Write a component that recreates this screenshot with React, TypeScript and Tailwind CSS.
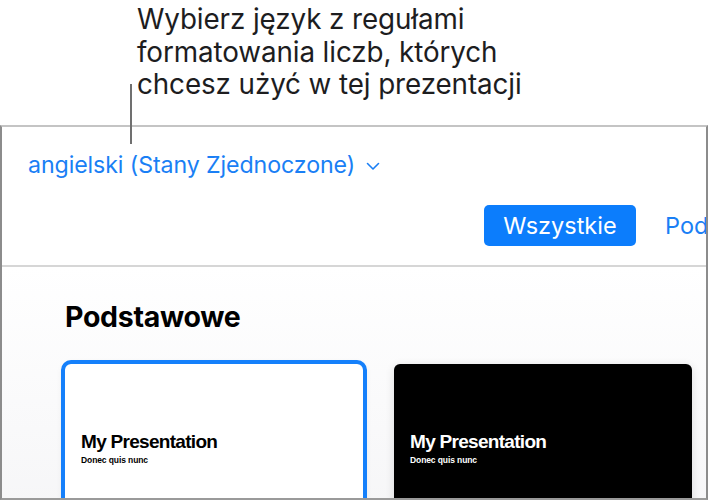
import React from "react";

const sans = { fontFamily: "Inter, 'Noto Sans', sans-serif" };

function Chevron() {
  return (
    <svg width="14" height="9" viewBox="0 0 14 9" className="ml-[11px] mt-[2px]">
      <path d="M1.5 1.5 L7 7 L12.5 1.5" fill="none" stroke="#1a7ff5" strokeWidth="1.6" strokeLinecap="round" strokeLinejoin="round" />
    </svg>
  );
}

function SlideCard({ dark, selected }: { dark?: boolean; selected?: boolean }) {
  return (
    <div
      className={
        "relative w-[298px] h-[200px] shrink-0 rounded-[6px] shadow-[0_2px_10px_rgba(0,0,0,0.12)] " +
        (dark ? "bg-black text-white" : "bg-white text-black") +
        (selected ? " outline-4 outline-[#1580fb] outline-offset-0" : "")
      }
    >
      <div className="pt-[67px] pl-[16px]" style={{ fontFamily: "'Liberation Sans', Arial, sans-serif" }}>
        <div className="text-[19px] leading-[21px] font-bold tracking-[-0.7px]">My Presentation</div>
        <div className="text-[8.5px] leading-[10px] font-bold mt-[3px] tracking-[-0.1px]">Donec quis nunc</div>
      </div>
    </div>
  );
}

export default function App() {
  return (
    <div className="relative w-[708px] h-[500px] bg-white overflow-hidden" style={sans}>
      <div className="h-[125px] pl-[137px] pt-[3px] text-[27.8px] leading-[32.5px] text-[#1d1d1f] tracking-[-0.1px] whitespace-nowrap">
        <div>Wybierz język z regułami</div>
        <div>formatowania liczb, których</div>
        <div>chcesz użyć w tej prezentacji</div>
      </div>
      <div className="h-[375px] border-t-2 border-t-[#c4c4c4] border-x-2 border-x-[#8c8c8c] border-b-2 border-b-[#9a9a9a] flex flex-col overflow-hidden">
        <div className="h-[140px] shrink-0 bg-white border-b-2 border-b-[#d6d6d6] flex flex-col">
          <div className="flex items-center pl-[26px] pt-[23px] text-[23.2px] leading-[30px] text-[#1a7ff5] tracking-[-0.1px] whitespace-nowrap">
            <span>angielski (Stany Zjednoczone)</span>
            <Chevron />
          </div>
          <div className="flex items-center pl-[482px] pt-[25px] whitespace-nowrap">
            <div className="w-[152px] h-[41px] rounded-[5px] bg-[#0c7dfc] text-white text-[23.5px] flex items-center justify-center shrink-0">
              Wszystkie
            </div>
            <div className="ml-[29px] text-[23.5px] text-[#1a7ff5]">Podstawowe</div>
          </div>
        </div>
        <div className="flex-1 bg-gradient-to-b from-white to-[#f4f4f6] pl-[63px]">
          <div className="pt-[33px] text-[28.5px] leading-[34px] font-bold text-black tracking-[-0.3px]">Podstawowe</div>
          <div className="flex gap-[31px] mt-[30px]">
            <SlideCard selected />
            <SlideCard dark />
          </div>
        </div>
      </div>
      <div className="absolute left-[130px] top-[84px] w-[2px] h-[60px] bg-[#707070]" />
    </div>
  );
}
